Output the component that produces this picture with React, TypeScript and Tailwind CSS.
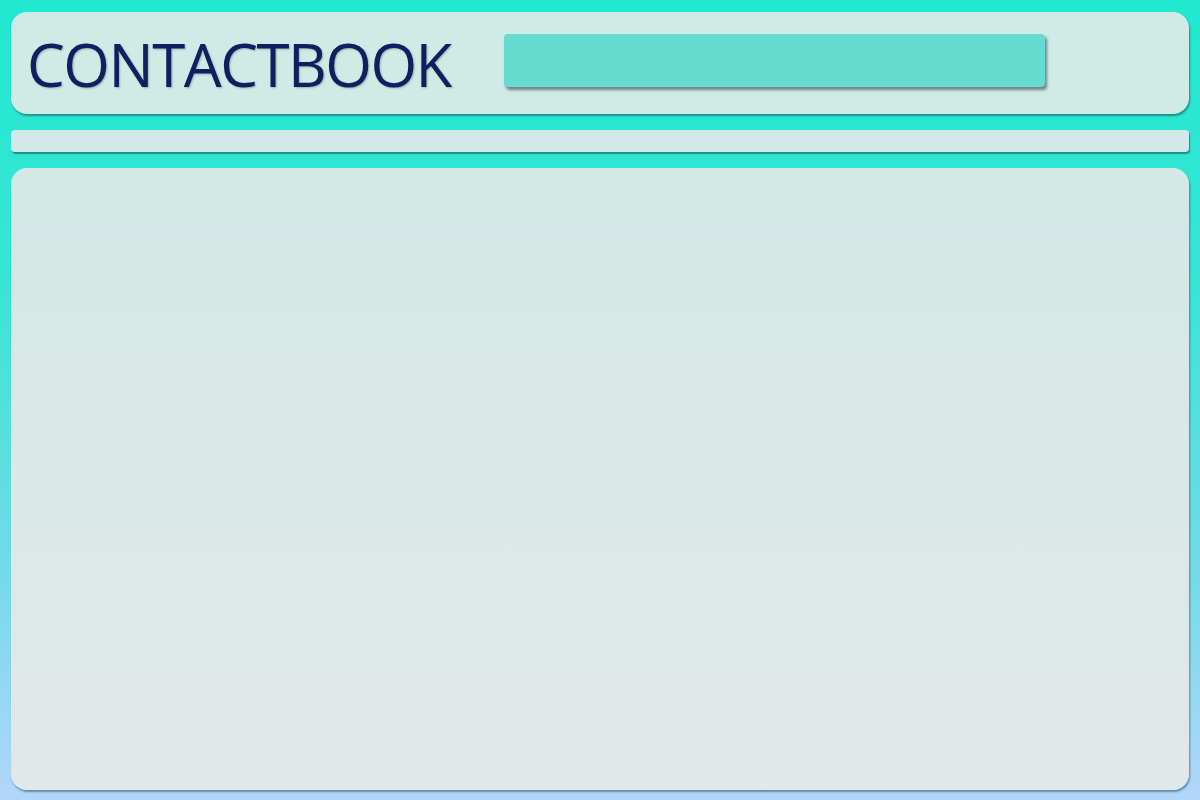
export default function App() {
  return (
    <div className="h-[800px] w-[1200px] flex flex-col gap-4 px-[11px] pt-3 pb-[10px] bg-[linear-gradient(to_bottom,#20e9d0_0%,#38e5d5_35%,#70dbe6_70%,#b2d6fa_100%)] font-['Open_Sans',sans-serif]">
      {/* Header */}
      <header className="h-[102px] shrink-0 flex items-center gap-[53px] pl-[16px] rounded-[16px] bg-[#d0eae6] shadow-[1px_2px_2px_rgba(20,110,100,0.7)]">
        <h1 className="text-[60px] leading-none font-normal text-[#0e2060] tracking-[-1.5px] [text-shadow:1px_1px_2px_rgba(0,0,0,0.25)] mt-[2px]">
          CONTACTBOOK
        </h1>
        <div className="w-[541px] h-[53px] -mt-[5px] rounded-[4px] bg-[#66dcd0] shadow-[2px_3px_3px_rgba(60,60,60,0.6)]" />
      </header>

      {/* Toolbar strip */}
      <div className="h-[22px] shrink-0 rounded-[4px] bg-[#d2eae7] shadow-[1px_2px_1px_rgba(20,110,100,0.7)]" />

      {/* Main panel */}
      <main className="flex-1 rounded-[16px] bg-[linear-gradient(to_bottom,#d2e9e6,#e2e7ea)] shadow-[1px_2px_2px_rgba(40,90,120,0.6)]" />
    </div>
  );
}
